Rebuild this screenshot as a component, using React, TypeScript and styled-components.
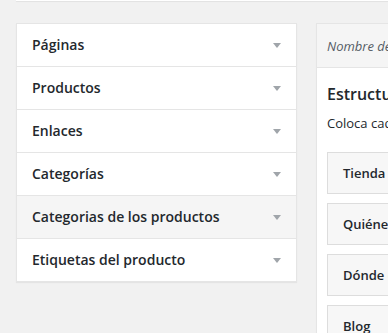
import styled, { createGlobalStyle } from 'styled-components';

const sections = [
  { title: 'Páginas' },
  { title: 'Productos' },
  { title: 'Enlaces' },
  { title: 'Categorías' },
  { title: 'Categorias de los productos', active: true },
  { title: 'Etiquetas del producto' },
];

const menuItems = ['Tienda', 'Quiénes somos', 'Dónde estamos', 'Blog'];

function Arrow() {
  return (
    <ArrowIcon width="8" height="5" viewBox="0 0 8 5">
      <polygon points="0,0 8,0 4,5" fill="#a0a5aa" />
    </ArrowIcon>
  );
}

function App() {
  return (
    <>
      <GlobalStyle />
      <Page>
        <TopStrip />
        <Columns>
          <Accordion>
            {sections.map((s) => (
              <SectionTitle key={s.title} $active={!!s.active}>
                <span>{s.title}</span>
                <Arrow />
              </SectionTitle>
            ))}
          </Accordion>

          <MenuPanel>
            <MenuHeader>Nombre del menú</MenuHeader>
            <MenuBody>
              <MenuTitle>Estructura del menú</MenuTitle>
              <MenuHint>Coloca cada elemento en el orden que prefieras.</MenuHint>
              <ItemList>
                {menuItems.map((item) => (
                  <ItemBar key={item}>{item}</ItemBar>
                ))}
              </ItemList>
            </MenuBody>
          </MenuPanel>
        </Columns>
      </Page>
    </>
  );
}

export default App;

// styles
const GlobalStyle = createGlobalStyle`
  html, body {
    margin: 0;
    padding: 0;
    background: #f1f1f1;
    font-family: 'Open Sans', 'Noto Sans', sans-serif;
    color: #23282d;
    overflow: hidden;
  }
`;

const Page = styled.div`
  width: 388px;
  height: 333px;
  overflow: hidden;
  padding-left: 16px;
  box-sizing: border-box;
`;

const TopStrip = styled.div`
  height: 1px;
  width: 420px;
  background: #fff;
  box-shadow: 0 1px 1px rgba(0, 0, 0, 0.07);
`;

const Columns = styled.div`
  display: flex;
  align-items: flex-start;
  gap: 19px;
  margin-top: 22px;
`;

const Accordion = styled.div`
  width: 281px;
  flex-shrink: 0;
  background: #fff;
  border: 1px solid #e5e5e5;
  box-sizing: border-box;
  box-shadow: 0 1px 1px rgba(0, 0, 0, 0.05);
`;

const SectionTitle = styled.div<{ $active: boolean }>`
  display: flex;
  align-items: center;
  justify-content: space-between;
  height: 40px;
  padding: 0 15px 2px 15px;
  font-size: 14px;
  font-weight: 600;
  background: ${(p) => (p.$active ? '#f5f5f5' : '#fff')};
  border-bottom: 1px solid #e5e5e5;

  &:last-child {
    border-bottom: none;
  }
`;

const ArrowIcon = styled.svg`
  display: block;
  flex-shrink: 0;
  margin-top: 2px;
`;

const MenuPanel = styled.div`
  width: 320px;
  flex-shrink: 0;
  background: #fff;
  border: 1px solid #e5e5e5;
  box-shadow: 0 1px 1px rgba(0, 0, 0, 0.04);
`;

const MenuHeader = styled.div`
  height: 43px;
  display: flex;
  align-items: center;
  padding: 0 10px;
  background: #f5f5f5;
  border-bottom: 1px solid #e5e5e5;
  font-size: 13px;
  font-style: italic;
  color: #555d66;
  white-space: nowrap;
`;

const MenuBody = styled.div`
  padding: 15px 10px 40px;
`;

const MenuTitle = styled.h3`
  margin: 0;
  font-size: 16px;
  font-weight: 600;
  line-height: 22.4px;
  white-space: nowrap;
`;

const MenuHint = styled.p`
  margin: 9px 0 0;
  font-size: 13px;
  line-height: 19.5px;
  white-space: nowrap;
`;

const ItemList = styled.div`
  display: flex;
  flex-direction: column;
  gap: 9px;
  margin-top: 18px;
`;

const ItemBar = styled.div`
  height: 40px;
  display: flex;
  align-items: center;
  padding: 0 15px;
  background: #f7f7f7;
  border: 1px solid #dddddd;
  font-size: 13px;
  font-weight: 600;
  white-space: nowrap;
`;
